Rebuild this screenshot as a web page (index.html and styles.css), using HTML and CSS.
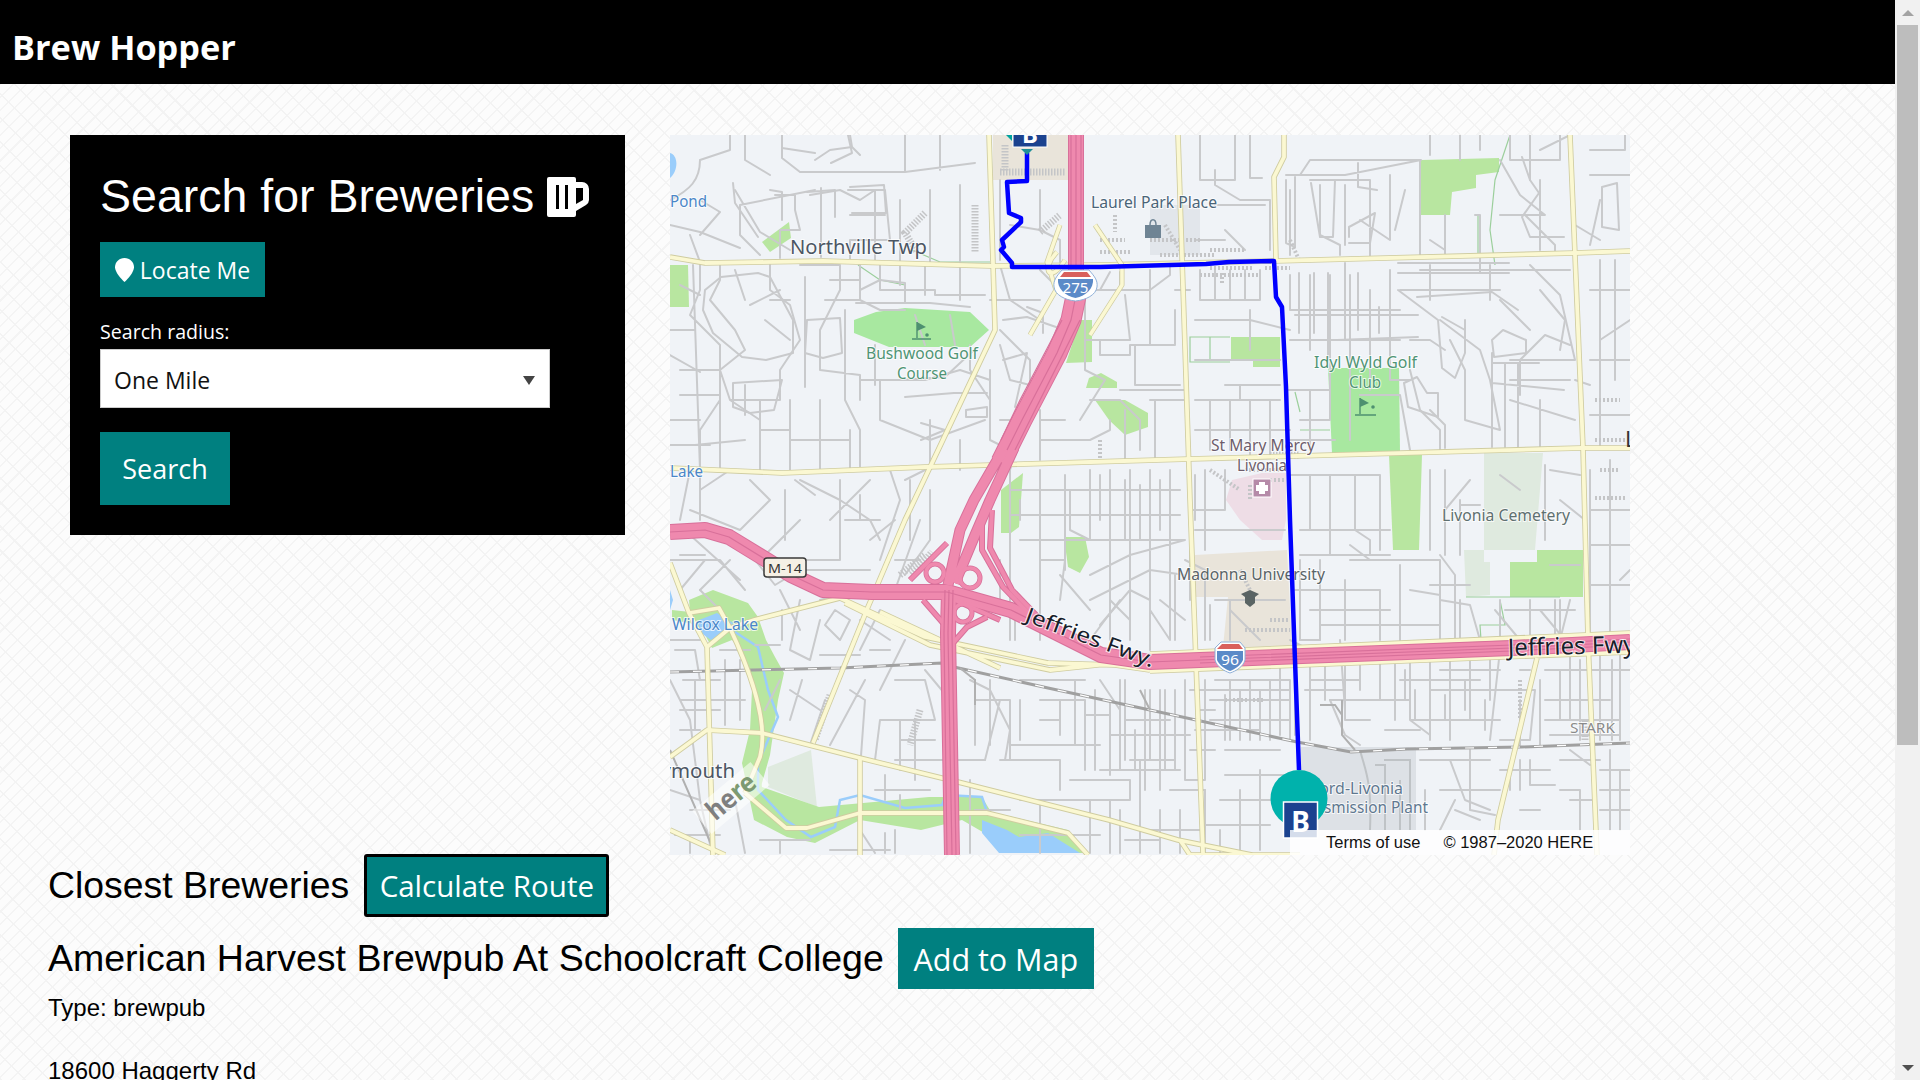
FILE: index.html
```html
<!DOCTYPE html>
<html lang="en">
<head>
<meta charset="utf-8">
<title>Brew Hopper</title>
<link rel="stylesheet" href="styles.css">
</head>
<body>
<div class="window">
<div class="page">
  <header class="topbar"><h1 class="brand">Brew Hopper</h1></header>
  <div class="search-row">
    <section class="panel">
      <h2 class="panel-title">Search for Breweries
        <svg class="mug" viewBox="0 0 42 40" aria-hidden="true"><path fill="#fff" fill-rule="evenodd" d="M2 0H27a2 2 0 0 1 2 2V5H35a7 7 0 0 1 7 7V23a6 6 0 0 1-3 5L29 34V38a2 2 0 0 1-2 2H2a2 2 0 0 1-2-2V2A2 2 0 0 1 2 0ZM9 8V32H12V8ZM18 8V32H21V8ZM29 11V27L36 23V11Z"/></svg>
      </h2>
      <button class="btn btn-locate" type="button">
        <svg class="pin" viewBox="0 0 19 24" aria-hidden="true"><path fill="#fff" d="M9.5 0C14.8 0 19 4 19 9.300C19 14 13 21 9.500 24C6 21 0 14 0 9.300C0 4 4.200 0 9.500 0Z"/></svg>
        Locate Me
      </button>
      <label class="radius-label" for="radius">Search radius:</label>
      <div class="select-wrap">
        <select class="radius" id="radius"><option>One Mile</option></select>
      </div>
      <button class="btn btn-search" type="button">Search</button>
    </section>
    <div class="map">
      <svg class="map-art" viewBox="670 135 960 720" aria-label="Route map">
        <rect x="670" y="135" width="960" height="720" fill="#f0f3f7"/>
        <!-- land use -->
        <g fill="#e9e4da">
          <path d="M993 135H1068V180H993Z"/>
          <path d="M1195 555L1287 550L1292 647H1223L1228 597H1195Z"/>
        </g>
        <path fill="#eedde6" d="M1232 480L1262 473H1286V520L1282 540H1262L1240 520L1226 500Z" />
        <path fill="#dde1e6" d="M1301 747H1416V830H1301Z"/>
        <path fill="#d9dde2" d="M1150 205H1200V255H1150Z" opacity=".6"/>
        <g fill="#dfeadf">
          <path d="M1484 453H1543L1535 550H1464L1466 597L1490 595V562H1484Z"/>
          <path d="M768 767L811 750L817 807L768 787Z"/>
        </g>
        <g fill="#b8e6a0">
          <path d="M1421 160L1499 158V172L1476 175V188L1452 192L1450 215H1419Z"/>
          <path d="M1231 337H1280V367H1253V360H1231Z"/>
          <path d="M1389 455H1422L1419 550H1393Z"/>
          <path d="M670 265H688L689 307H670Z"/>
          <path d="M1080 320H1092V362L1066 363Z"/>
          <path d="M1086 388H1117V382L1101 373L1089 378Z"/>
          <path d="M1095 400H1125L1148 413V427L1125 435L1109 420Z"/>
          <path d="M1001 533V490L1023 473L1019 527L1011 533Z"/>
          <path d="M1064 537H1085L1089 557L1080 573L1068 567Z"/>
          <path d="M762 242L789 222L791 238L770 252Z"/>
          <path d="M1510 562H1537V550H1583V597H1510Z"/>
          <path d="M689 600L713 590L748 603L758 617L766 640L775 657L784 673L778 700L770 755L760 790L742 763L750 730L752 690L740 650L732 640L712 648L700 625L672 620L672 610L690 612Z"/>
          <path d="M742 763L758 767L762 787L819 807L929 797L982 797L991 812L1068 830L1087 853H1019L962 820L921 830L860 820L815 843L787 837L754 820Z"/>
        </g>
        <g fill="#a8e8a0">
          <path d="M854 320L876 312L905 308L970 312L989 330L970 347H925L889 347L864 337L854 333Z"/>
          <path d="M1328 368H1399L1400 452L1332 453Z"/>
        </g>
        <g fill="#9acdfb">
          <path d="M670 153C678 155 679 170 670 178Z"/>
          <path d="M670 590L673 600L670 610Z"/>
          <path d="M699 620L717 613L733 623L727 633L711 640L697 630Z"/>
          <path d="M982 820L1007 830L1019 837L1048 833L1080 853H999L982 833Z"/>
        </g>
        <path fill="none" stroke="#9acdfb" stroke-width="2.500" d="M735 632L758 647L768 690L778 717L758 763L758 790L786 820L811 837L835 827L840 800L860 795L905 808L942 805L946 795L982 797L987 812"/>
        <!-- park paths -->
        <path fill="none" stroke="#9ccf9c" stroke-width="1.200" d="M1230 337H1190V362H1230 M1210 337V360 M1300 430H1330M1300 412L1295 392M1510 135L1495 180L1490 230L1495 265M1478 215V255 M1466 597L1560 597M1500 600L1505 625L1480 625L1482 655M955 645L965 650M858 265L880 280L905 285M912 250L940 262L990 262"/>
        <!-- streets -->
        <g fill="none" stroke="#c9cacc" stroke-width="2" stroke-linejoin="round" stroke-linecap="round">
          <path d="M782 135V158L800 172L905 172L975 163M815 160L830 150L852 147L850 135M852 147L860 155M815 190L740 205L740 235L760 255M735 190L760 232L790 250M670 225L700 232L740 248M690 235L700 262M775 195H795V210L800 230H780V258M810 195L840 190L860 200L875 190V262M848 190H885L890 240H850V262M850 215H885M900 200V262M930 190V262M960 185V262M905 135V172M940 135V170M1000 180V260M1040 190V230L1060 240V262M1010 225L1040 230"/>
          <path d="M720 265V280L710 300L735 330L745 350L720 370L730 400L760 420M700 265V290L690 315L720 345L720 400L700 430L700 470M770 265V290L790 305L800 340L780 370V400L730 400M750 305L780 290M765 320L790 340M800 265H840V290L820 330V370L860 375V400M860 265V300H840M860 300L880 310H905M845 310V400L860 430V470M880 265V290H935V295H985M900 265V285M925 265V295M960 265V300M860 380H925L960 370L990 380M880 380V420L930 440L985 420M990 370V440M970 345V370L990 400M930 420V470M960 440V470M680 370H720M670 420H700M670 445H710M720 400V470M760 400V470M790 400V470M820 400V470M850 430V470M693 265L700 470M1000 265L1010 300L1040 320M990 300H1040M1000 330L1030 360V400L1010 470M1000 420H1030M990 440L1010 450M1040 270L1060 290"/>
          <path d="M1095 290H1150L1170 275V262M1085 300V370L1105 380L1080 420M1125 295L1130 340H1085M1100 340V355H1130V345H1175V310M1135 345V385H1180M1120 390H1185M1090 400H1120L1140 420V450M1150 400H1185M1125 410V460M1155 400V460M1040 410V440H1090L1110 430V420M1040 440V460M1065 420H1040M1150 300V345M1100 290L1110 272M1120 272V290M1150 270V300M1175 290H1190"/>
          <path d="M1200 270V300H1260V270M1230 270V300M1215 270V300M1245 270V300M1195 320H1250L1290 330M1250 310V330M1195 360H1280M1195 400H1280M1195 430H1290M1250 320V350M1210 400V450M1230 400V450M1250 400V455M1270 400V455M1225 385H1280M1240 385V400M1200 135V180H1235V135M1215 170V185L1240 200H1270V250M1215 205H1265M1225 230L1245 250M1195 240H1225M1250 135V178H1262"/>
          <path d="M1290 190V255M1310 180H1370V260M1300 175L1310 160H1420V255M1320 185V235L1340 245V255M1345 185V245M1390 175V240L1360 220M1405 190L1395 230M1420 215V255M1445 215V255M1430 240L1445 250M1475 215H1480V255M1480 150V135M1510 135V160H1560V135M1500 160L1520 195L1545 215H1500M1530 180V130M1540 150L1570 135M1525 215L1555 245V255M1540 180V250"/>
          <path d="M1290 275V310M1310 275V350M1330 275V420M1350 275V440M1370 290V390M1390 270V380H1410M1290 310H1400M1290 340H1400M1360 395H1400L1410 450M1420 270H1570M1430 265V300M1490 265V300M1400 290H1500M1410 340H1430L1445 350M1440 320L1480 350L1490 380L1500 430L1465 420V370L1450 340M1520 395V360L1545 335L1570 345M1530 265L1560 295L1575 360M1540 400V450M1510 360H1575M1510 380H1570M1510 400L1575 420M1500 300L1530 330M1410 370L1420 410L1440 430V450M1300 390H1330M1300 420H1330M1310 390V450M1335 440H1290M1430 410L1445 425V448M1465 345L1465 320M1480 255V272M1575 380L1590 385M1600 260V448M1615 260V380M1590 290H1630M1590 360H1630M1590 415H1630M1600 340L1630 320"/>
          <path d="M1195 475V520M1195 530H1285M1190 510H1225M1205 470V510M1225 470V510M1290 475H1380V550M1310 475V530M1330 475V555M1355 475V530L1370 540V555M1300 530H1390M1300 555H1390M1430 470V550M1445 470V555M1460 500V555M1545 465V540M1560 500L1585 520M1550 470L1580 475M1590 470V640M1610 460V640M1590 510H1630M1590 545H1630M1590 585H1630"/>
          <path d="M1010 470V640M1040 470V640M1065 475V570M1090 470V540M1110 470V640M1130 470V640M1150 470V650M1170 470V640M1010 490H1180M1010 515H1180M1020 540H1185M1090 575L1130 555L1185 540M1090 600L1150 570L1185 575M1100 625L1130 590L1150 600V640M1060 575L1090 610M1150 610L1170 640M1185 560L1205 570V640M1205 500V550M1300 560V640M1320 560V640M1350 560H1440V640M1380 590V640M1400 565V640M1410 590L1440 595M1440 600L1470 605L1480 640M1310 590H1380M1310 610H1390M1460 600V640M1500 600V640M1530 600V640M1560 600V640M1450 640H1480M1320 625H1440M1505 610H1575"/>
          <path d="M700 470V520M750 480L770 500L740 530L690 510M730 470L700 490M800 480L840 500L870 520L880 540M800 520L760 560M785 540V490M840 480V560H800M870 480L830 520M890 470L900 500L880 560M910 480V540M920 520L895 590M930 490V540L905 575M670 560H720L745 590M690 535L740 580M705 560L680 590M820 600L860 590M700 590L730 560M780 590L800 630M800 600L790 650L810 660L820 620M835 610L825 625L840 640L850 620L835 610M880 610L860 650M670 640H700M720 650H750"/>
          <path d="M683 680H720M680 700H745M680 730H700M695 680V730M725 660V725M740 660V720M680 710H720M670 680L690 720L700 800L712 853M780 680L765 710M802 680L790 720M790 690L820 710M825 700L810 745M865 680L830 745M850 690L865 700L860 770M895 680H925L935 720H880L875 760M900 720V770M915 720V780M900 740H935M895 760H930M925 670L950 700M970 680L990 690L1010 730L1005 760M975 700H1010V760M1000 700L985 760M1020 680H1085M1040 700H1085V770M1010 745H1100M1060 700V735M1095 690V770M1110 700V775M1110 735L1190 735M1100 770H1180"/>
          <path d="M1120 680V770M1145 690V790M1160 690V790M1175 690V770M1185 680V780H1205M1205 680V780M1125 720H1170M1130 760H1175M1195 730H1260M1215 680H1290V740M1230 680V740M1250 680V740M1270 680V740M1210 700H1290M1210 720H1290M1225 775H1290L1285 800M1240 790V853M1205 790V853M1220 800H1280M1260 770V850M1205 825H1270"/>
          <path d="M1000 760H1060V790M1020 800H1090V853M1040 800V853M1070 780H1130V800H1070M1140 760V853M1160 810V853M1150 830H1200M1110 800V853M1020 835H1100M970 780V853M975 810H1010M930 760H985M945 770V790M950 830V853M875 790H930M885 775V800M900 795V810M895 830V853M860 830L875 853M830 850H890M885 833V853"/>
          <path d="M690 810H730M670 790L700 800M675 835H720M690 840V853M710 770V800M735 800L745 853M760 840H810M780 840V853"/>
          <path d="M1310 650V740M1325 650V700M1345 650V720H1370M1360 650V690M1380 650V700H1410M1395 650V720M1410 650V720L1430 735M1430 650V740M1450 650V740M1470 650V720M1490 650V700M1440 670H1500M1430 690H1510M1410 720H1500M1500 650L1490 740M1520 670H1530M1510 690H1535L1530 740H1500M1400 680H1480M1310 680H1360M1330 700H1400M1560 670V720M1570 650V720M1545 700H1610M1545 720H1620M1600 650V740M1620 650V740M1545 670H1630"/>
          <path d="M1420 760H1490M1450 760L1465 800L1490 810M1440 790H1500M1455 810L1480 820M1500 770H1550M1510 770V790M1530 760V785H1555M1560 760H1600M1560 790H1580V830M1570 800H1595M1610 750V830M1620 770V830M1440 830L1455 800M1425 790V830M1520 810H1540"/>
          <path d="M1310 650L1290 640M1330 700L1345 735L1360 745M1340 640L1345 710M1620 580L1630 570"/>
          <!-- curved subdivisions -->
          <path d="M848 135L852 153L831 163M782 148L815 153M733 183L735 203L758 237M770 190L782 192V220M807 192L835 190V217M850 187L884 185L886 213L852 213M821 188V257M700 200L720 212L700 235M670 200C690 190 700 180 700 160M700 160L730 150V135M745 135V160L770 175"/>
          <path d="M705 290L721 277L758 273L770 277L793 320V353L766 360L742 357L713 333L703 310ZM733 383L782 380L774 410L750 413L733 407ZM807 320L840 318L842 353L823 358L805 353ZM805 277V387M856 303L930 303L970 307M900 380L945 377L974 350M905 397L954 393L987 393M966 410L987 407V417H966ZM921 423L945 430L921 440M1003 360L1027 353L1015 407M1003 320L1027 317L1056 327M1027 307L1043 313V333M860 290L880 280L905 283L905 303M915 315L925 345M875 345V385M950 315L955 345M735 270L745 300M770 300L790 300M680 285L700 295M670 330L695 330M670 355L700 372M745 385V415M680 395H720M695 445L745 440M830 280H860M825 300H845M1000 345L1010 380L1030 385"/>
          <path d="M1286 180V243L1295 247V177M1311 183L1320 237H1333L1335 180M1286 175H1345L1421 160M1358 163V187L1377 190M1349 237V227L1375 213L1370 243H1349M1522 157L1530 180L1539 193L1522 217L1530 237H1564M1602 187L1617 183L1619 230L1602 227ZM1398 263H1509M1398 273H1509M1417 297L1492 292L1518 310M1398 290L1438 320L1442 368L1455 378L1465 353V330L1442 317M1492 340L1503 330L1526 340V353L1494 357ZM1404 383L1417 377L1427 393H1438V417L1408 407ZM1492 353V447M1505 363V447M1518 363V447M1492 363H1539M1492 383L1564 390M1286 390H1328M1299 273V333M1314 273V333M1328 273V360M1345 263V340M1358 273V330M1370 293V333M1379 307V333M1295 315H1418M1337 340L1418 337M1540 290L1565 320L1560 350M1460 135V160M1430 135V155M1590 150H1625V135M1590 175H1630M1600 200L1590 245M1575 225L1600 240"/>
          <path d="M1445 475V498M1470 480L1445 510V545M1460 505H1480M1500 475L1520 490M1440 555L1455 575V640M1495 610L1520 640M1540 610L1565 640M1430 585H1470M1550 565L1580 565M1555 600V640M1570 600L1560 640M1350 545L1370 560M1295 590L1320 590M1300 640H1320M1345 580V640M1195 605V645M1210 605V640M1230 600V640"/>
          <path d="M1215 690H1290M1225 750H1280M1305 690H1345M1385 730H1420M1520 760V790M1570 750L1590 765M1470 750V810L1495 815M1405 670V700M1415 690V720M1445 695V720M1465 680V710M1485 700V730M1520 700V745M1540 680V745M1580 660V740M1612 660V740M1550 735H1620M1600 770H1630M1600 790H1630M1600 810H1630M1280 660V735M1295 670V735"/>
          <path d="M975 680V745M990 680V745M1075 680V745M1125 680V760M1135 730V770M1150 690V760M1165 690V770M1020 700V740M1040 720H1060M1085 715H1110M1100 680L1120 710M1240 690V740M1260 690V740M1225 695V740M1190 690H1215M1200 710H1215M1190 750H1215M1170 790H1205M1220 830V853M1290 800H1300M1120 810V853M1125 840H1160M1180 810V853"/>
          <path d="M1020 500V520M1070 490V530L1090 540M1100 475V520M1125 480V540M1140 485V540M1160 480V530M1190 545V600M1215 600H1285M1230 610L1260 640M1090 640L1120 600M1110 600L1130 620M1000 560V600M1015 600V640M1040 560H1065L1060 600M1160 600L1185 620M1175 575V640"/>
          <path d="M795 480L815 495M790 440H850M760 430H790M690 470L680 520M755 560L775 585L800 570M845 520H880M860 495V520M905 480L925 470M895 560H920M870 540L895 520M800 570H870M860 620L890 640M905 640L880 690M820 655H860M870 650L890 650M755 645H780M782 610V640M675 650H695L700 680M720 610L700 590M680 555H705"/>
        </g>
        <!-- dense block texture -->
        <g fill="none" stroke="#c4c5c7">
          <path stroke-width="7" stroke-dasharray="1.500 1.500" d="M925 213L905 233L917 252M975 205V252M1000 172H1065M1040 232L1060 215M1005 145V172"/>
          <path stroke-width="4" stroke-dasharray="2 2" d="M1100 240H1125M1100 252H1130M1115 215V232M1150 240H1200M1160 255H1215M1210 250H1245M1165 225L1180 250M1290 240L1300 262M1210 268H1252M1222 273V285M1265 268H1290M1200 275H1260"/>
          <path stroke-width="4" stroke-dasharray="2 2" d="M1245 470H1290M1250 485V500M1270 480H1285M1595 400H1620M1595 440H1625M1600 470H1620M1595 498H1625M1210 470L1240 490M1240 570L1250 590M1245 630H1290M1270 620H1290M1100 440V460M1520 680V720M1225 700H1265"/>
          <path stroke-width="7" stroke-dasharray="1.500 1.500" d="M900 575L925 555M912 575L932 552M830 695L815 740M920 710L910 745M1270 455H1300M1585 740V720"/>
        </g>
        <!-- ford plant roads -->
        <g fill="none" stroke="#bfc3c6" stroke-width="2">
          <path d="M1360 750C1365 770 1372 780 1370 830M1384 760H1410V830M1375 765H1385V830M1400 780V830"/>
        </g>
        <!-- rail -->
        <g fill="none">
          <path stroke="#a0a0a0" stroke-width="3" d="M670 672L840 668L942 663L954 667L1048 688L1150 710L1297 742L1351 752L1407 749L1521 747L1630 743"/>
          <path stroke="#fff" stroke-width="1.200" stroke-dasharray="9 14" d="M670 672L840 668L942 663L954 667L1048 688L1150 710L1297 742L1351 752L1407 749L1521 747L1630 743"/>
          <path stroke="#b0b0b0" stroke-width="2" d="M960 668L975 680L975 705M1140 690L1150 710M1342 700V735L1355 750M1320 705H1335L1342 715M670 750L715 853"/>
        </g>
        <!-- arterials -->
        <g fill="none" stroke-linejoin="round">
          <g stroke="#cfcca0" stroke-width="5.500">
            <path id="art1" d="M670 257L705 263L823 261L991 266L1100 265L1274 261L1575 253L1630 251"/>
            <path id="art2" d="M670 468L782 473L925 467L1190 459L1581 448L1630 448"/>
            <path id="art3" d="M989 135L993 263L995 330L905 520L868 607L813 743"/>
            <path id="art4" d="M1178 135L1190 500L1203 853"/>
            <path id="art5" d="M1284 135V157L1274 177L1276 260"/>
            <path id="art6" d="M1570 135L1583 448L1588 640L1597 855"/>
            <path id="art7" d="M1537 658L1498 820L1494 855"/>
            <path id="art8" d="M670 563L689 613L707 647L713 855"/>
            <path id="art9" d="M689 613L719 608L730 628L707 647M730 628L754 620L840 598L925 637L1048 663L1115 665L1150 670M845 603L930 645L1050 670L1125 662M880 612L1000 668"/>
            <path id="art10" d="M670 757L707 730L762 733L860 758L958 782L1109 820L1178 840L1252 855"/>
            <path id="art11" d="M745 793L786 828L807 828L860 813L987 813L1068 833L1088 855"/>
            <path id="art12" d="M730 628C745 660 770 720 760 757L745 793M860 758V855M670 830L725 855M1180 840L1190 855L1300 855"/>
            <path id="art13" d="M1150 671L1630 652M1150 654L1630 633"/>
          </g>
          <g stroke="#fbf8d2" stroke-width="3.800">
            <use href="#art1"/><use href="#art2"/><use href="#art3"/><use href="#art4"/><use href="#art5"/><use href="#art6"/><use href="#art7"/><use href="#art8"/><use href="#art9"/><use href="#art10"/><use href="#art11"/><use href="#art12"/><use href="#art13"/>
          </g>
          <path stroke="#cfcca0" stroke-width="5" d="M1057 252C1040 270 1050 285 1065 260M1060 225L1047 262L1056 290L1030 335M1095 225L1122 265L1122 285L1090 335"/>
          <path stroke="#fbf8d2" stroke-width="3.500" d="M1057 252C1040 270 1050 285 1065 260M1060 225L1047 262L1056 290L1030 335M1095 225L1122 265L1122 285L1090 335"/>
        </g>
        <!-- highways -->
        <g fill="none" stroke-linejoin="round">
          <g stroke="#d8709a">
            <path stroke-width="16" d="M1076 135L1076 270L1075 300"/>
            <path stroke-width="21" d="M1076 296L1071 320L1057 353L1022 420L1001 462"/>
            <path stroke-width="11" d="M1003 450L974 500L960 530L948 585M1014 448L990 500L975 535L955 583"/>
            <path stroke-width="16" d="M1630 642L1512 648L1200 660L1150 662L1101 655L1011 610L947 592L872 592L823 590L791 575L729 537L705 530L670 532"/>
            <path stroke-width="16" d="M949 590L948 633L952 855"/>
            <path stroke-width="6" d="M982 517V550L1003 587L1040 625M992 510L990 548L1012 590L1060 640M910 580L947 543M923 600L943 623M953 643L967 627L987 617M1000 608L955 596M1000 620L955 600M975 540L955 583"/>
            <g stroke-width="5"><circle cx="935" cy="573" r="9"/><circle cx="970" cy="578" r="10"/><circle cx="963" cy="613" r="9"/></g>
          </g>
          <g stroke="#ef89ae">
            <path stroke-width="14" d="M1076 135L1076 270L1075 300"/>
            <path stroke-width="19" d="M1076 296L1071 320L1057 353L1022 420L1001 462"/>
            <path stroke-width="9" d="M1003 450L974 500L960 530L948 585M1014 448L990 500L975 535L955 583"/>
            <path stroke-width="14" d="M1630 642L1512 648L1200 660L1150 662L1101 655L1011 610L947 592L872 592L823 590L791 575L729 537L705 530L670 532"/>
            <path stroke-width="14" d="M949 590L948 633L952 855"/>
            <path stroke-width="4" d="M982 517V550L1003 587L1040 625M992 510L990 548L1012 590L1060 640M910 580L947 543M923 600L943 623M953 643L967 627L987 617M1000 608L955 596M1000 620L955 600M975 540L955 583"/>
            <g stroke-width="3.500"><circle cx="935" cy="573" r="9"/><circle cx="970" cy="578" r="10"/><circle cx="963" cy="613" r="9"/></g>
          </g>
          <g stroke="#d8709a" stroke-width="1.200">
            <path d="M1076 135V270L1075 300L1071 320L1057 353L1022 420L1007 450M1071 135V270M1081 135V270M1062 320L1020 400L1001 440M1080 320L1040 400L1015 450"/>
            <path d="M1630 642L1512 648L1200 660L1150 662L1101 655L1011 610L947 592L872 592L823 590L791 575L729 537L705 530L670 532"/>
            <path d="M1630 639L1512 645L1200 657M1630 645L1512 651L1200 663"/>
            <path d="M949 590L948 633L952 855M945 590L944 633L947 855M953 590L952 633L956 855"/>
          </g>
        </g>
        <!-- shields -->
        <g font-family="'Noto Sans','Liberation Sans',sans-serif" text-anchor="middle">
          <rect x="764" y="558" width="42" height="19" rx="3" fill="#f5f0e5" stroke="#3a3a3a" stroke-width="1.500"/>
          <text x="785" y="572.500" font-size="13" fill="#333" textLength="34" lengthAdjust="spacingAndGlyphs">M-14</text>
          <g>
            <path fill="#fff" stroke="#8fb0d8" stroke-width="1" d="M1062 270H1089C1094 276 1098 280 1097 287C1096 295 1086 300 1075.500 301C1065 300 1055 295 1054 287C1053 280 1057 276 1062 270Z"/>
            <path fill="#5b8ac8" d="M1058 279H1093C1094 288 1086 296 1075.500 298C1065 296 1057 288 1058 279Z"/>
            <path fill="#d9605c" d="M1064 272H1087L1091 277H1060Z"/>
            <text x="1075.500" y="292.500" font-size="15" fill="#fff" textLength="26" lengthAdjust="spacingAndGlyphs">275</text>
          </g>
          <g>
            <path fill="#fff" stroke="#8fb0d8" stroke-width="1" d="M1221 642H1240L1245 648V660C1243 667 1236 671 1230 673C1224 671 1217 667 1215 660V648Z"/>
            <path fill="#5b8ac8" d="M1217 651H1243V660C1241 665 1235 669 1230 671C1225 669 1219 665 1217 660Z"/>
            <path fill="#d9605c" d="M1222 644H1239L1243 649H1217Z"/>
            <text x="1230" y="665" font-size="15" fill="#fff" textLength="18" lengthAdjust="spacingAndGlyphs">96</text>
          </g>
        </g>
        <!-- poi icons -->
        <g>
          <rect x="1253" y="479" width="18" height="18" fill="#b58aa8" stroke="#fff" stroke-width="1"/>
          <path fill="#fff" d="M1259 482H1265V485H1268V491H1265V494H1259V491H1256V485H1259Z"/>
          <path fill="#6f8494" d="M1145 225H1161V238H1145Z"/>
          <path fill="none" stroke="#6f8494" stroke-width="1.500" d="M1150 225C1150 218 1156 218 1156 225"/>
          <path fill="#5a6464" d="M1241 594L1250 590L1259 594L1255 597V603L1250 607L1245 603V597Z"/>
          <g fill="none" stroke="#4e9070" stroke-width="1.400">
            <path d="M917 322V338M912 339H931"/>
            <path d="M1360 398V414M1355 415H1376"/>
          </g>
          <g fill="#4e9070">
            <path d="M917 322L926 327L917 331Z"/><circle cx="927" cy="335" r="1.800"/>
            <path d="M1360 398L1369 403L1360 407Z"/><circle cx="1373" cy="407" r="1.800"/>
          </g>
        </g>
        <!-- labels -->
        <g class="map-labels">
          <text class="lbl water" x="670" y="207" textLength="37" lengthAdjust="spacingAndGlyphs">Pond</text>
          <text class="lbl water" x="670" y="477" textLength="33" lengthAdjust="spacingAndGlyphs">Lake</text>
          <text class="lbl water" x="672" y="630" textLength="86" lengthAdjust="spacingAndGlyphs">Wilcox Lake</text>
          <text class="lbl town" x="790" y="254" textLength="137" lengthAdjust="spacingAndGlyphs">Northville Twp</text>
          <text class="lbl mall" x="1091" y="208" textLength="126" lengthAdjust="spacingAndGlyphs">Laurel Park Place</text>
          <text class="lbl golf" x="866" y="359" textLength="112" lengthAdjust="spacingAndGlyphs">Bushwood Golf</text>
          <text class="lbl golf" x="897" y="379" textLength="50" lengthAdjust="spacingAndGlyphs">Course</text>
          <text class="lbl golf" x="1314" y="368" textLength="103" lengthAdjust="spacingAndGlyphs">Idyl Wyld Golf</text>
          <text class="lbl golf" x="1349" y="388" textLength="32" lengthAdjust="spacingAndGlyphs">Club</text>
          <text class="lbl hosp" x="1211" y="451" textLength="104" lengthAdjust="spacingAndGlyphs">St Mary Mercy</text>
          <text class="lbl hosp" x="1237" y="471" textLength="50" lengthAdjust="spacingAndGlyphs">Livonia</text>
          <text class="lbl cem" x="1442" y="521" textLength="128" lengthAdjust="spacingAndGlyphs">Livonia Cemetery</text>
          <text class="lbl uni" x="1177" y="580" textLength="148" lengthAdjust="spacingAndGlyphs">Madonna University</text>
          <text class="lbl town" x="735" y="778" text-anchor="end" textLength="92" lengthAdjust="spacingAndGlyphs">Plymouth</text>
          <text class="lbl plant" x="1403" y="794" text-anchor="end" textLength="92" lengthAdjust="spacingAndGlyphs">Ford-Livonia</text>
          <text class="lbl plant" x="1428" y="813" text-anchor="end" textLength="136" lengthAdjust="spacingAndGlyphs">Transmission Plant</text>
          <text class="lbl stark" x="1570" y="733" textLength="45" lengthAdjust="spacingAndGlyphs">STARK</text>
          <text class="lbl fwy" transform="translate(1024 621) rotate(20)" textLength="136" lengthAdjust="spacingAndGlyphs">Jeffries Fwy.</text>
          <text class="lbl fwy fwy-big" transform="translate(1508 656) rotate(-1.500)">Jeffries Fwy</text>
          <text class="lbl edge" x="1625" y="447">L</text>
        </g>
        <!-- here logo -->
        <g transform="translate(731 798) rotate(-40)">
          <rect x="-38" y="-15" width="76" height="30" fill="#fff" opacity=".55"/>
          <text class="here" x="-27" y="8" textLength="56" lengthAdjust="spacingAndGlyphs"><tspan fill="#7f7f7f">he</tspan><tspan fill="#7d9a72">re</tspan></text>
        </g>
        <!-- route -->
        <path fill="none" stroke="#0000ff" stroke-width="4.500" stroke-linejoin="round" d="M1027 153L1027 181L1007 182L1009 213L1021 218V222L1002 240L1004 247L1001 250L1012 263L1012 267L1100 267L1206 264L1229 262L1274 261L1276 297L1282 307L1286 387L1290 520L1294 633L1299 770"/>
        <!-- markers -->
        <path fill="#00a39e" d="M1006 135H1012V141Z"/>
        <rect x="1013" y="130" width="34" height="17" fill="#1b428f" stroke="#fff" stroke-width="1"/>
        <text class="pin-letter" x="1030" y="143" text-anchor="middle" font-size="24">B</text>
        <path fill="#1f8f98" d="M1021 149H1033L1027 155Z"/>
        <circle cx="1299" cy="798.500" r="28.500" fill="#00b2ac"/>
        <rect x="1283.500" y="802" width="34" height="36" fill="#1b428f" stroke="#fff" stroke-width="1.500"/>
        <text class="pin-letter" x="1300.500" y="832" text-anchor="middle" font-size="28">B</text>
      </svg>
      <div class="attribution"><span>Terms of use</span><span>© 1987–2020 HERE</span></div>
    </div>
  </div>
  <section class="results">
    <div class="result-head">
      <h2 class="results-title">Closest Breweries</h2>
      <button class="btn btn-route" type="button">Calculate Route</button>
    </div>
    <article class="brewery">
      <div class="brewery-head">
        <h3 class="brewery-name">American Harvest Brewpub At Schoolcraft College</h3>
        <button class="btn btn-add" type="button">Add to Map</button>
      </div>
      <p class="brewery-type">Type: brewpub</p>
      <p class="brewery-addr">18600 Haggerty Rd</p>
    </article>
  </section>
</div>
<aside class="scrollbar" aria-hidden="true">
  <div class="sb-btn"><span class="sb-up"></span></div>
  <div class="sb-thumb"></div>
  <div class="sb-track"></div>
  <div class="sb-btn"><span class="sb-down"></span></div>
</aside>
</div>
</body>
</html>
```

FILE: styles.css
```css
* { box-sizing: border-box; }
html, body { margin: 0; padding: 0; height: 100%; overflow: hidden; }
body { font-family: "Liberation Sans", Arial, sans-serif; color: #000; }

.window { display: flex; width: 1920px; height: 1080px; overflow: hidden; }
.page {
  width: 1895px;
  height: 1080px;
  overflow: hidden;
  flex: none;
  background-color: #fcfcfc;
  background-image:
    repeating-linear-gradient(45deg, #f3f3f3 0 1.5px, transparent 1.5px 17px),
    repeating-linear-gradient(-45deg, #f4f4f4 0 1.5px, transparent 1.5px 9px);
}

.topbar { height: 84px; background: #000; display: flex; align-items: center; padding: 10px 0 0 12px; }
.brand { margin: 0; font: 700 34.300px/1 "Open Sans", "Noto Sans", sans-serif; color: #fff; }

.search-row { display: flex; align-items: flex-start; gap: 45px; padding: 51px 0 0 70px; }
.panel { width: 555px; height: 400px; background: #000; color: #fff; padding: 36px 30px 0; flex: none; }
.panel-title { margin: 0; font: 400 46.500px/1.2 "Liberation Sans", sans-serif; color: #fff; display: flex; align-items: center; gap: 13px; white-space: nowrap; height: 52px; }
.mug { width: 42px; height: 40px; flex: none; }

.btn { display: flex; align-items: center; justify-content: center; border: 0; background: #008080; color: #fff; font-family: "Open Sans", "Noto Sans", sans-serif; padding: 0; border-radius: 0; }
.btn-locate { width: 165px; height: 55px; font-size: 23px; gap: 6px; margin-top: 19px; }
.pin { width: 19px; height: 24px; }
.radius-label { display: block; margin-top: 21px; font: 400 19.600px/28px "Open Sans", "Noto Sans", sans-serif; color: #fff; }
.select-wrap { position: relative; width: 450px; height: 59px; margin-top: 3px; }
.select-wrap::after { content: ""; position: absolute; right: 15px; top: 27px; border-left: 6px solid transparent; border-right: 6px solid transparent; border-top: 9px solid #444; }
.radius { width: 100%; height: 100%; appearance: none; -webkit-appearance: none; background: #fff; border: 1px solid #ccc; border-radius: 0; padding: 2px 13px 0; color: #111; font: 400 23px "Open Sans", "Noto Sans", sans-serif; }
.btn-search { width: 130px; height: 73px; font-size: 27px; margin-top: 24px; }

.map { position: relative; width: 960px; height: 720px; flex: none; overflow: hidden; }
.map-art { display: block; width: 960px; height: 720px; }
.attribution { position: absolute; left: 620px; right: 0; bottom: 0; height: 25px; background: rgba(255,255,255,.82); display: flex; gap: 23px; padding-left: 36px; font: 400 16.500px/25px "Liberation Sans", sans-serif; color: #111; }

.lbl { font-family: "Noto Sans", "Liberation Sans", sans-serif; font-size: 16px; paint-order: stroke; stroke: #fff; stroke-width: 2px; stroke-opacity: .75; }
.water { fill: #4a86c8; }
.town { fill: #4c5664; font-size: 20px; }
.mall { fill: #4a6478; }
.golf { fill: #4f9474; }
.hosp { fill: #6d5d6c; }
.cem { fill: #5f7070; }
.uni { fill: #5a6468; }
.plant { fill: #5f7890; }
.stark { fill: #8b8b8b; font-size: 15px; }
.fwy { fill: #16202a; font-size: 21px; }
.fwy-big { font-size: 24px; }
.edge { fill: #333; font-size: 22px; stroke: none; }
.here { font: 700 27px "Noto Sans", "Liberation Sans", sans-serif; }
.pin-letter { font-family: "Noto Sans", "Liberation Sans", sans-serif; font-weight: 700; fill: #fff; }

.results { padding-left: 48px; margin-top: -1px; }
.result-head { display: flex; align-items: center; gap: 15px; height: 63px; }
.results-title { margin: 0; font: 400 37.400px/1 "Liberation Sans", sans-serif; }
.btn-route { width: 245px; height: 63px; border: 3px solid #000; border-radius: 3px; font-size: 29.500px; }
.brewery { margin-top: 11px; }
.brewery-head { display: flex; align-items: center; gap: 14px; height: 61px; }
.brewery-name { margin: 0; font: 400 37.500px/1 "Liberation Sans", sans-serif; white-space: nowrap; }
.btn-add { width: 196px; height: 61px; font-size: 30.500px; }
.brewery-type { margin: 1px 0 0; font: 400 24px/36px "Liberation Sans", sans-serif; }
.brewery-addr { margin: 27px 0 0; font: 400 24px/36px "Liberation Sans", sans-serif; }

.scrollbar { width: 25px; height: 1080px; flex: none; display: flex; flex-direction: column; background: #f1f1f1; }
.sb-btn { height: 25px; flex: none; display: flex; align-items: center; justify-content: center; }
.sb-up { border-left: 6px solid transparent; border-right: 6px solid transparent; border-bottom: 6px solid #a3a3a3; }
.sb-down { border-left: 6px solid transparent; border-right: 6px solid transparent; border-top: 6px solid #505050; }
.sb-thumb { width: 21px; height: 720px; margin-left: 2px; flex: none; background: #bdbdbd; }
.sb-track { flex: 1; }
```
